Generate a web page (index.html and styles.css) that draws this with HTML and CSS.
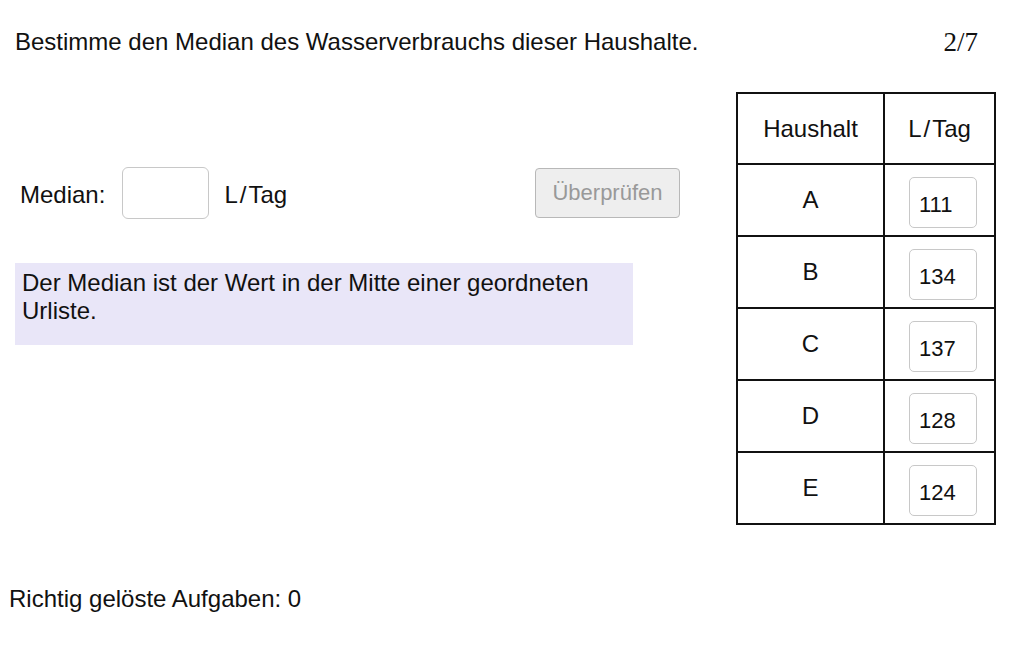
FILE: index.html
```html
<!DOCTYPE html>
<html>
<head>
    <title>Median</title>
    <link rel="stylesheet" href="styles.css">
</head>
<body>
    <div class="page">
        <div class="top">
            <p class="task">Bestimme den Median des Wasserverbrauchs dieser Haushalte.</p>
            <span class="counter">2/7</span>
        </div>

        <div class="main">
            <div class="left">
                <div class="answer-row">
                    <label class="label" for="median">Median:</label>
                    <input class="field" id="median" type="text">
                    <span class="unit">L<span class="slash">/</span>Tag</span>
                    <button class="btn-check" disabled>Überprüfen</button>
                </div>
                <div class="hint">Der Median ist der Wert in der Mitte einer geordneten Urliste.</div>
            </div>

            <table class="data">
                <tr><th>Haushalt</th><th>L<span class="slash">/</span>Tag</th></tr>
                <tr><td>A</td><td><span class="cell-box">111</span></td></tr>
                <tr><td>B</td><td><span class="cell-box">134</span></td></tr>
                <tr><td>C</td><td><span class="cell-box">137</span></td></tr>
                <tr><td>D</td><td><span class="cell-box">128</span></td></tr>
                <tr><td>E</td><td><span class="cell-box">124</span></td></tr>
            </table>
        </div>

        <p class="score">Richtig gelöste Aufgaben: 0</p>
    </div>
</body>
</html>
```

FILE: styles.css
```css
body {
    margin: 0;
    font-family: "Liberation Sans", Arial, sans-serif;
    font-size: 24px;
    color: #111;
    background: #fff;
}
.page {
    width: 1032px;
}
.top {
    display: flex;
    justify-content: space-between;
    align-items: center;
    padding: 28px 54px 0 15px;
    line-height: 28px;
}
.task {
    margin: 0;
}
.counter {
    font-family: "Liberation Serif", "Times New Roman", serif;
    font-size: 27px;
}
.main {
    display: flex;
    margin-top: 36px;
    padding-left: 15px;
}
.left {
    width: 665px;
    margin-right: 56px;
    padding-top: 75px;
}
.answer-row {
    display: flex;
    align-items: center;
    padding-left: 5px;
    height: 52px;
}
.label {
    margin-right: 17px;
    padding-top: 4px;
}
.field {
    width: 87px;
    height: 52px;
    box-sizing: border-box;
    border: 1px solid #c8c8c8;
    border-radius: 6px;
    font: inherit;
    margin-right: 15px;
}
.unit {
    padding-top: 4px;
}
.slash {
    margin: 0 2px;
}
.btn-check {
    margin-left: auto;
    width: 145px;
    height: 50px;
    background: #eeeeee;
    border: 1px solid #b8b8b8;
    border-radius: 4px;
    color: #999;
    font-family: inherit;
    font-size: 22px;
}
.hint {
    margin-top: 44px;
    width: 618px;
    box-sizing: border-box;
    padding: 6px 7px 20px;
    line-height: 28px;
    background: #e9e6f8;
}
.data {
    border-collapse: collapse;
    width: 260px;
}
.data th, .data td {
    border: 2px solid #111;
    text-align: center;
    font-weight: normal;
    height: 70px;
    padding: 0;
}
.data th {
    height: 69px;
}
.data th:first-child, .data td:first-child {
    width: 145px;
}
.cell-box {
    display: inline-block;
    width: 68px;
    height: 51px;
    box-sizing: border-box;
    margin: 5px 0 0 7px;
    border: 1px solid #c8c8c8;
    border-radius: 5px;
    text-align: left;
    padding-left: 9px;
    line-height: 53px;
    font-size: 22px;
    vertical-align: middle;
}
.score {
    margin: 60px 0 0 9px;
    line-height: 28px;
}
```
